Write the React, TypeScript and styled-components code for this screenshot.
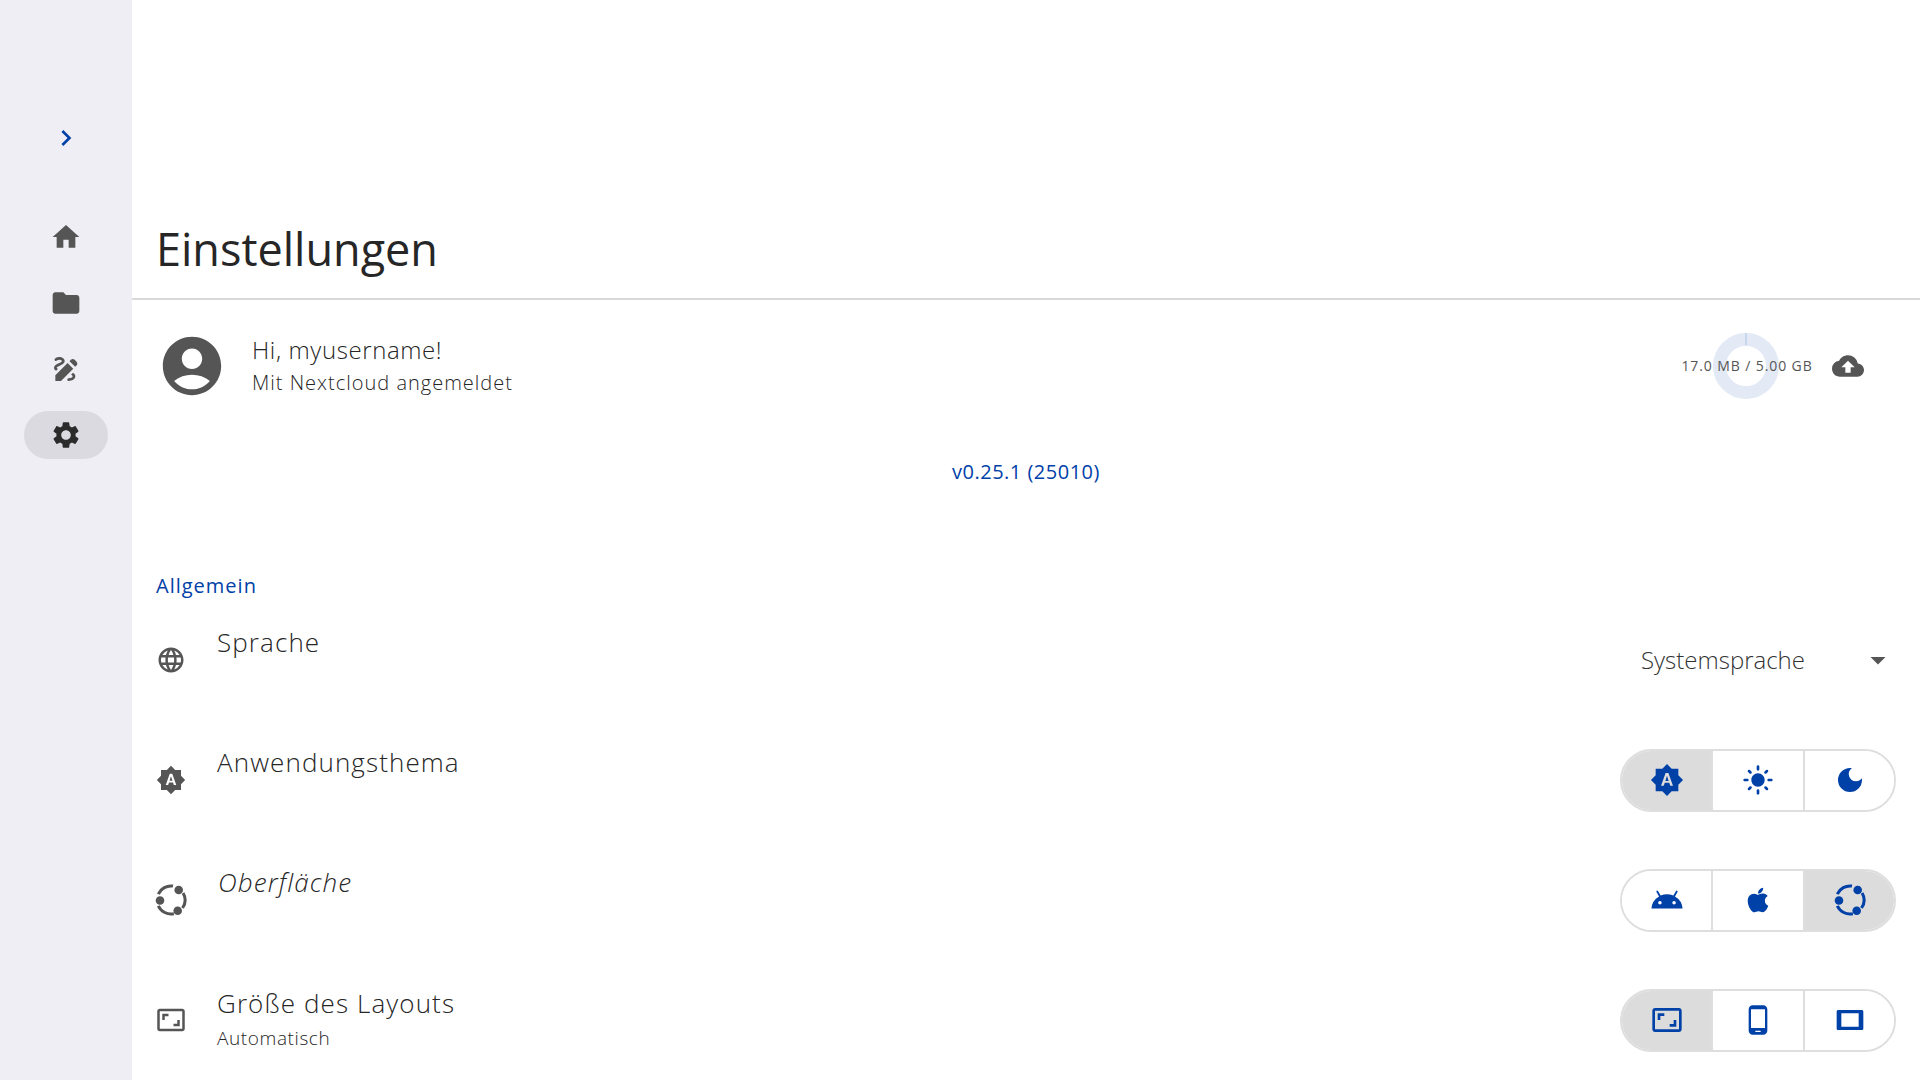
import React from 'react'
import styled, { createGlobalStyle } from 'styled-components';
import {
  MdChevronRight, MdHome, MdFolder, MdDraw, MdSettings, MdAccountCircle, MdCloudUpload,
  MdLanguage, MdBrightnessAuto, MdLightMode, MdDarkMode, MdAndroid, MdAspectRatio,
  MdPhoneAndroid, MdArrowDropDown,
} from 'react-icons/md';
import { FaApple } from 'react-icons/fa';

const BLUE = '#0041a8';
const GREY = '#555555';

const GlobalStyle = createGlobalStyle`
  html, body {
    margin: 0;
    height: 100%;
    overflow: hidden;
    background: #fff;
    font-family: "Open Sans", "Noto Sans", sans-serif;
    font-weight: 300;
    color: #262626;
  }
  * { box-sizing: border-box; }
  svg { flex: none; }
`;

const Page = styled.div`
  display: flex;
  width: 1920px;
  height: 1080px;
`;

const Sidebar = styled.nav`
  width: 132px;
  flex: none;
  background: #eeeef4;
  display: flex;
  flex-direction: column;
  align-items: center;
  padding-top: 114px;
`;

const Toggle = styled.div`
  height: 48px;
  margin-bottom: 51px;
  display: flex;
  align-items: center;
  color: ${BLUE};
`;

const NavItem = styled.div<{ $active?: boolean }>`
  width: 84px;
  height: 48px;
  margin-bottom: 18px;
  border-radius: 24px;
  display: flex;
  align-items: center;
  justify-content: center;
  background: ${p => (p.$active ? '#dadae0' : 'transparent')};
  color: ${p => (p.$active ? '#2b2b2b' : GREY)};
`;

const Main = styled.main`
  flex: 1;
  display: flex;
  flex-direction: column;
  min-width: 0;
`;

const Header = styled.header`
  height: 300px;
  flex: none;
  padding: 0 0 22px 24px;
  border-bottom: 2px solid #d9d9d9;
  display: flex;
  align-items: flex-end;
`;

const Title = styled.h1`
  margin: 0;
  font-size: 45px;
  line-height: 54px;
  font-weight: 400;
  color: #262626;
`;

const UserRow = styled.section`
  height: 132px;
  flex: none;
  padding: 0 56px 0 25px;
  display: flex;
  align-items: center;
  gap: 25px;
`;

const Avatar = styled.div`
  color: ${GREY};
  display: flex;
`;

const UserText = styled.div`
  flex: 1;
  display: flex;
  flex-direction: column;
  gap: 4px;
`;

const Greeting = styled.div`
  font-size: 24px;
  line-height: 30px;
  letter-spacing: 0.6px;
`;

const Provider = styled.div`
  font-size: 20px;
  line-height: 28px;
  letter-spacing: 1px;
`;

const StorageGroup = styled.div`
  display: flex;
  align-items: center;
  gap: 20px;
`;

const Storage = styled.div`
  position: relative;
  display: flex;
  align-items: center;
  justify-content: center;
  width: 130px;
  height: 66px;
`;

const Ring = styled.svg`
  position: absolute;
  left: 31px;
  top: 0;
`;

const StorageText = styled.span`
  position: relative;
  top: -1px;
  font-size: 14px;
  white-space: nowrap;
  letter-spacing: 0.9px;
  color: #555;
  font-weight: 400;
`;

const CloudIcon = styled.div`
  color: ${GREY};
  display: flex;
`;

const Version = styled.div`
  height: 78px;
  flex: none;
  display: flex;
  align-items: center;
  justify-content: center;
  font-size: 20px;
  font-weight: 400;
  letter-spacing: 0.5px;
  color: ${BLUE};
`;

const SectionLabel = styled.div`
  height: 30px;
  margin-top: 60px;
  flex: none;
  padding-left: 24px;
  display: flex;
  align-items: center;
  font-size: 20px;
  font-weight: 400;
  letter-spacing: 1px;
  color: ${BLUE};
`;

const Row = styled.div`
  height: 120px;
  flex: none;
  padding: 0 24px;
  display: flex;
  align-items: center;
`;

const RowIcon = styled.div`
  width: 30px;
  flex: none;
  margin-right: 31px;
  display: flex;
  align-items: center;
  justify-content: center;
  color: ${GREY};
`;

const RowText = styled.div<{ $withSub?: boolean }>`
  flex: 1;
  display: flex;
  flex-direction: column;
  padding-top: ${p => (p.$withSub ? '2px' : '0')};
`;

const RowTitle = styled.div<{ $italic?: boolean }>`
  height: 36px;
  margin-top: -2px;
  font-size: 26px;
  line-height: 36px;
  letter-spacing: 1.1px;
  font-style: ${p => (p.$italic ? 'italic' : 'normal')};
  padding-left: ${p => (p.$italic ? '1px' : '0')};
`;

const RowSub = styled.div`
  height: 34px;
  font-size: 19px;
  line-height: 34px;
  letter-spacing: 0.6px;
`;

const Select = styled.div`
  width: 255px;
  height: 34px;
  margin-top: -1px;
  display: flex;
  align-items: center;
  justify-content: space-between;
  font-size: 24px;
  color: #333;
`;

const SelectArrow = styled.div`
  color: ${GREY};
  display: flex;
`;

const Segmented = styled.div`
  width: 276px;
  height: 63px;
  flex: none;
  border: 2px solid #dedede;
  border-radius: 32px;
  overflow: hidden;
  display: grid;
  grid-template-columns: 89px 92px 91px;
`;

const Segment = styled.div<{ $selected?: boolean }>`
  display: flex;
  align-items: center;
  justify-content: center;
  color: ${BLUE};
  background: ${p => (p.$selected ? '#dcdcdc' : '#fff')};
  & + & {
    border-left: 2px solid #dedede;
  }
`;

const UbuntuIcon = ({ size }: { size: number }) => (
  <svg width={size} height={size} viewBox="0 0 36 36" fill="currentColor">
    <circle cx="25.7" cy="8" r="4.3" />
    <circle cx="7" cy="18.5" r="4.3" />
    <circle cx="24.7" cy="28.7" r="4.3" />
    <g fill="none" stroke="currentColor" strokeWidth="3">
      <path d="M30.1 11A14 14 0 0 1 29.5 26" />
      <path d="M20.9 31.7A14 14 0 0 1 5.3 23.9" />
      <path d="M5.3 12.1A14 14 0 0 1 20 4.1" />
    </g>
  </svg>
);

const TabletIcon = ({ size }: { size: number }) => (
  <svg width={size} height={size} viewBox="0 0 24 24" fill="currentColor">
    <path fillRule="evenodd" d="M3.2 4.5h17.6c.7 0 1.2.5 1.2 1.2v12.6c0 .7-.5 1.2-1.2 1.2H3.2c-.7 0-1.2-.5-1.2-1.2V5.700c0-.7.5-1.2 1.2-1.2zM5.500 7v10h13V7z" />
  </svg>
);

const SIZE = 32;

const App = () => {
  return (
    <Page>
      <GlobalStyle />
      <Sidebar>
        <Toggle><MdChevronRight size={32} /></Toggle>
        <NavItem><MdHome size={SIZE} /></NavItem>
        <NavItem><MdFolder size={SIZE} /></NavItem>
        <NavItem><MdDraw size={SIZE} /></NavItem>
        <NavItem $active><MdSettings size={SIZE} /></NavItem>
      </Sidebar>
      <Main>
        <Header>
          <Title>Einstellungen</Title>
        </Header>
        <UserRow>
          <Avatar><MdAccountCircle size={70} /></Avatar>
          <UserText>
            <Greeting>Hi, myusername!</Greeting>
            <Provider>Mit Nextcloud angemeldet</Provider>
          </UserText>
          <StorageGroup>
            <Storage>
              <Ring width="66" height="66" viewBox="0 0 66 66">
                <circle cx="33" cy="33" r="26.5" fill="none" stroke="#e3eaf6" strokeWidth="13" />
                <rect x="32.5" y="0" width="1" height="12" fill="#a9c3e6" />
              </Ring>
              <StorageText>17.0 MB / 5.00 GB</StorageText>
            </Storage>
            <CloudIcon><MdCloudUpload size={32} /></CloudIcon>
          </StorageGroup>
        </UserRow>
        <Version>v0.25.1 (25010)</Version>
        <SectionLabel>Allgemein</SectionLabel>
        <Row>
          <RowIcon><MdLanguage size={30} /></RowIcon>
          <RowText>
            <RowTitle>Sprache</RowTitle>
            <RowSub />
          </RowText>
          <Select>
            Systemsprache
            <SelectArrow><MdArrowDropDown size={36} /></SelectArrow>
          </Select>
        </Row>
        <Row>
          <RowIcon><MdBrightnessAuto size={30} /></RowIcon>
          <RowText>
            <RowTitle>Anwendungsthema</RowTitle>
            <RowSub />
          </RowText>
          <Segmented>
            <Segment $selected><MdBrightnessAuto size={34} /></Segment>
            <Segment><MdLightMode size={32} /></Segment>
            <Segment><MdDarkMode size={32} /></Segment>
          </Segmented>
        </Row>
        <Row>
          <RowIcon><UbuntuIcon size={36} /></RowIcon>
          <RowText>
            <RowTitle $italic>Oberfläche</RowTitle>
            <RowSub />
          </RowText>
          <Segmented>
            <Segment><MdAndroid size={34} /></Segment>
            <Segment><FaApple size={28} /></Segment>
            <Segment $selected><UbuntuIcon size={36} /></Segment>
          </Segmented>
        </Row>
        <Row>
          <RowIcon><MdAspectRatio size={30} /></RowIcon>
          <RowText $withSub>
            <RowTitle>Größe des Layouts</RowTitle>
            <RowSub>Automatisch</RowSub>
          </RowText>
          <Segmented>
            <Segment $selected><MdAspectRatio size={32} /></Segment>
            <Segment><MdPhoneAndroid size={32} /></Segment>
            <Segment><TabletIcon size={32} /></Segment>
          </Segmented>
        </Row>
      </Main>
    </Page>
  )
}

export default App;
